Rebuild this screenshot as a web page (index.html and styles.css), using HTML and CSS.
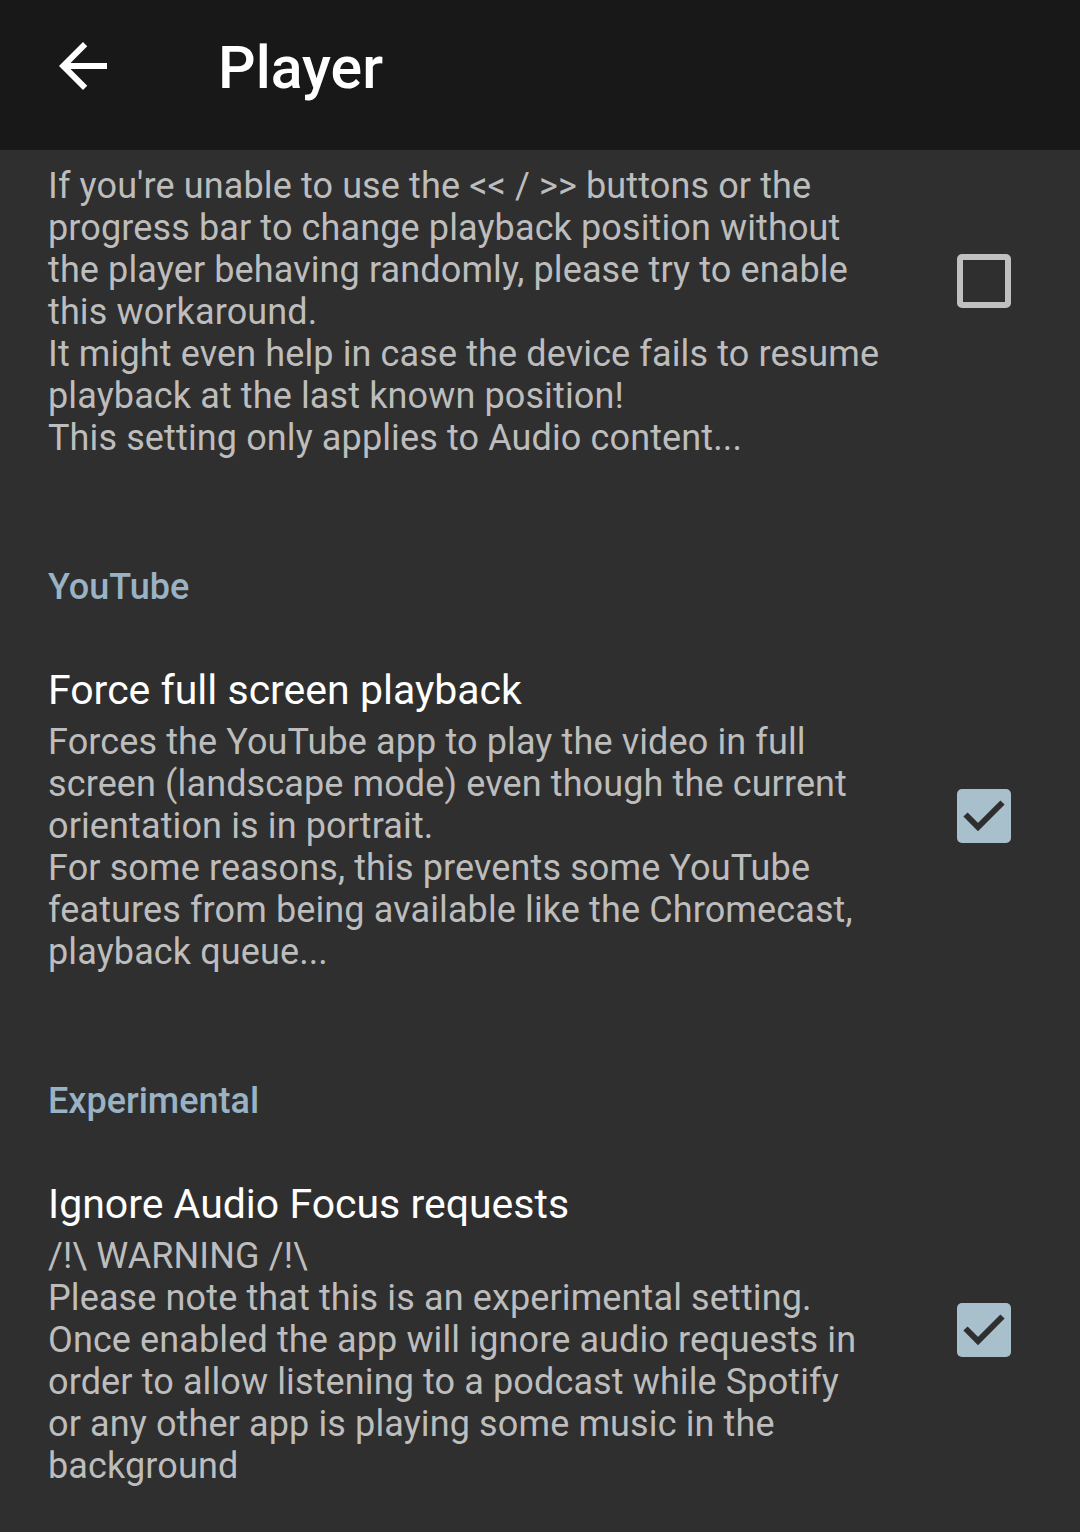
FILE: index.html
```html
<!DOCTYPE html>
<html lang="en">
<head>
<meta charset="utf-8">
<title>Player</title>
<link rel="stylesheet" href="styles.css">
</head>
<body>
<header class="toolbar">
  <svg class="back" viewBox="0 0 24 24" width="72" height="72" aria-hidden="true">
    <path d="M20 11H7.83l5.59-5.59L12 4l-8 8 8 8 1.41-1.41L7.83 13H20v-2z" fill="#ffffff"/>
  </svg>
  <h1 class="toolbar-title">Player</h1>
</header>
<main class="prefs">
  <div class="pref pref-first">
    <div class="pref-text">
      <p class="pref-summary">If you're unable to use the &lt;&lt; / &gt;&gt; buttons or the progress bar to change playback position without the player behaving randomly, please try to enable this workaround.<br>It might even help in case the device fails to resume playback at the last known position!<br>This setting only applies to Audio content...</p>
    </div>
    <span class="checkbox checkbox-top"></span>
  </div>

  <h2 class="category">YouTube</h2>
  <div class="pref">
    <div class="pref-text">
      <p class="pref-title">Force full screen playback</p>
      <p class="pref-summary">Forces the YouTube app to play the video in full screen (landscape mode) even though the current orientation is in portrait.<br>For some reasons, this prevents some YouTube features from being available like the Chromecast, playback queue...</p>
    </div>
    <span class="checkbox checked">
      <svg viewBox="0 0 54 54" width="54" height="54" aria-hidden="true"><path d="M8.5 25.5 L21 38 L45.5 13.5" fill="none" stroke="#2f2f2f" stroke-width="6"/></svg>
    </span>
  </div>

  <h2 class="category">Experimental</h2>
  <div class="pref">
    <div class="pref-text">
      <p class="pref-title">Ignore Audio Focus requests</p>
      <p class="pref-summary">/!\ WARNING /!\<br>Please note that this is an experimental setting.<br>Once enabled the app will ignore audio requests in order to allow listening to a podcast while Spotify or&nbsp;any other app is playing some music in the background</p>
    </div>
    <span class="checkbox checked">
      <svg viewBox="0 0 54 54" width="54" height="54" aria-hidden="true"><path d="M8.5 25.5 L21 38 L45.5 13.5" fill="none" stroke="#2f2f2f" stroke-width="6"/></svg>
    </span>
  </div>
</main>
</body>
</html>
```

FILE: styles.css
```css
* { box-sizing: border-box; }
html, body {
  margin: 0;
  padding: 0;
  background: #2f2f2f;
  font-family: Roboto, "Noto Sans", sans-serif;
}
body {
  width: 1080px;
  height: 1532px;
  overflow: hidden;
}
.toolbar {
  height: 150px;
  background: #181818;
  display: flex;
  align-items: center;
  padding-left: 47px;
}
.back {
  display: block;
  flex: none;
  margin-top: -18px;
}
.toolbar-title {
  margin: -14px 0 0 99px;
  color: #ffffff;
  font-size: 59px;
  font-weight: 500;
  line-height: 72px;
}
.prefs {
  padding: 0 0 0 48px;
}
.pref {
  display: flex;
  align-items: center;
  padding: 42px 0 42px 0;
}
.pref-first {
  align-items: flex-start;
  padding-top: 15px;
}
.pref-text {
  width: 840px;
  flex: none;
}
.pref-title {
  margin: 0 0 5px 0;
  color: #ffffff;
  font-size: 41px;
  line-height: 52px;
}
.pref-summary {
  margin: 0;
  color: #bdbdbd;
  font-size: 36px;
  line-height: 42px;
  letter-spacing: 0.12px;
}
.checkbox {
  flex: none;
  width: 54px;
  height: 54px;
  margin-left: 69px;
  margin-top: -6px;
  border: 6px solid #c0c0c0;
  border-radius: 5px;
  display: block;
}
.checkbox-top {
  margin-top: 89px;
}
.checkbox.checked {
  border: none;
  background: #a8bfcc;
}
.checkbox svg { display: block; }
.category {
  margin: 0;
  padding: 65px 0 14px 0;
  color: #9ab3c4;
  font-size: 36px;
  font-weight: 500;
  line-height: 42px;
}
```
